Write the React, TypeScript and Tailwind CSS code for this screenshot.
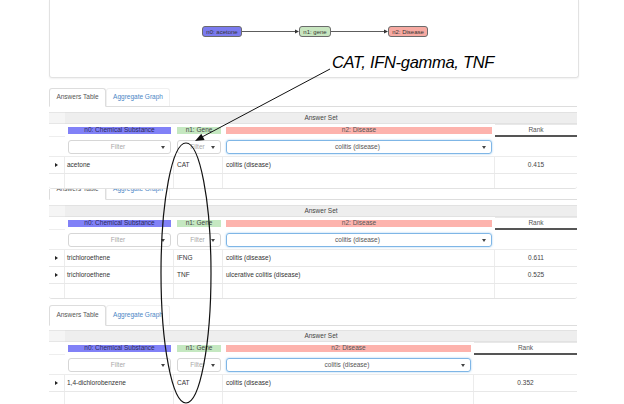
import React from "react";

type Row = [string, string, string, string];

function DownCaret() {
  return (
    <svg width="4" height="3" viewBox="0 0 4 3" className="shrink-0">
      <path d="M0 0h4L2 3z" fill="#444" />
    </svg>
  );
}

function RightCaret() {
  return (
    <svg width="3" height="4" viewBox="0 0 3 4">
      <path d="M0 0v4l3-2z" fill="#222" />
    </svg>
  );
}

function Select({ text, focus }: { text: string; focus?: boolean }) {
  return (
    <div
      className={
        focus
          ? "h-full rounded-[3px] border border-[#7fb6e6] shadow-[0_0_2px_rgba(102,175,233,0.7)] flex items-center pl-[6px] pr-[5px] text-[#555]"
          : "h-full rounded-[3px] border border-[#d6d6d6] flex items-center pl-[6px] pr-[5px] text-[#a8a8a8]"
      }
    >
      <span className="flex-1 text-center leading-none">{text}</span>
      <DownCaret />
    </div>
  );
}

function Node({ label, bg, w }: { label: string; bg: string; w: string }) {
  return (
    <div
      className={`${w} ${bg} h-[11px] border border-[#6b6b6b] rounded-[3px] flex items-center justify-center text-[6px] leading-none text-[#333]`}
    >
      {label}
    </div>
  );
}

function GraphArrow({ w }: { w: number }) {
  return (
    <svg width={w} height="11" viewBox={`0 0 ${w} 11`} className="shrink-0">
      <line x1="0" y1="5.5" x2={w - 3} y2="5.5" stroke="#333" strokeWidth="0.8" />
      <path d={`M${w - 4} 3.6L${w} 5.5L${w - 4} 7.4z`} fill="#333" />
    </svg>
  );
}

function Table({
  cols,
  rows,
  tabH,
  gap,
  blankH,
  bottomLine,
}: {
  cols: string;
  rows: Row[];
  tabH: string;
  gap: string;
  blankH: string;
  bottomLine?: boolean;
}) {
  return (
    <div className="w-[528px] ml-[49px] text-[6.5px] leading-none text-[#333]">
      <div className={`flex ${tabH} border-b border-[#dddddd]`}>
        <div className="w-[57px] -mb-px bg-white border border-[#dddddd] border-b-white rounded-t-[3px] flex items-center justify-center text-[#555]">
          Answers Table
        </div>
        <div className="w-[64px] border border-b-0 border-[#f0f0f0] rounded-t-[3px] flex items-center justify-center text-[#4a86c5]">
          Aggregate Graph
        </div>
      </div>
      <div className={`grid ${cols} h-[12px] ${gap}`}>
        <div className="bg-[#f5f5f5] border-y border-[#e6e6e6]" />
        <div className="col-span-4 bg-[#eeeeee] border-y border-[#e2e2e2] flex items-center justify-center text-[#444]">
          Answer Set
        </div>
      </div>
      <div className={`grid ${cols} h-[13px] items-center`}>
        <div className="h-full border-b border-[#eeeeee]" />
        <div className="px-[3px]">
          <div className="h-[7px] bg-[#8181f7] flex items-center justify-center text-[#2a2a5a]">
            n0: Chemical Substance
          </div>
        </div>
        <div className="pl-[3px] pr-[2px]">
          <div className="h-[7px] bg-[#c5e8c1] flex items-center justify-center text-[#444]">
            n1: Gene
          </div>
        </div>
        <div className="px-[3px]">
          <div className="h-[7px] bg-[#fdb3ad] flex items-center justify-center text-[#555]">
            n2: Disease
          </div>
        </div>
        <div className="h-full border-t border-t-[#e8e8e8] border-b-2 border-b-[#555] flex items-center justify-center text-[#555]">
          Rank
        </div>
      </div>
      <div className={`grid ${cols} h-[20px] pt-[3px] pb-[2px] border-b border-[#ececec]`}>
        <div />
        <div className="px-[3px]">
          <Select text="Filter" />
        </div>
        <div className="pl-[3px] pr-[2px]">
          <Select text="Filter" />
        </div>
        <div className="px-[3px]">
          <Select text="colitis (disease)" focus />
        </div>
        <div />
      </div>
      {rows.map((r, i) => (
        <div key={i} className={`grid ${cols} h-[17px] border-b border-[#e8e8e8]`}>
          <div className="flex items-center justify-center border-r border-[#ececec]">
            <RightCaret />
          </div>
          <div className="flex items-center pl-[2px] border-r border-[#ececec]">{r[0]}</div>
          <div className="flex items-center pl-[3px] border-r border-[#ececec]">{r[1]}</div>
          <div className="flex items-center pl-[3px] border-r border-[#ececec]">{r[2]}</div>
          <div className="flex items-center justify-center text-[#444]">{r[3]}</div>
        </div>
      ))}
      <div
        className={`grid ${cols} ${blankH} ${
          bottomLine ? "border-b border-[#e2e2e2] rounded-b-[3px]" : ""
        }`}
      >
        <div className="border-r border-[#ececec]" />
        <div className="border-r border-[#ececec]" />
        <div className="border-r border-[#ececec]" />
        <div className="border-r border-[#ececec]" />
        <div />
      </div>
    </div>
  );
}

export default function App() {
  return (
    <div className="relative w-[624px] h-[404px] overflow-hidden bg-white font-['Liberation_Sans',Arial,sans-serif]">
      {/* top graph panel */}
      <div className="ml-[49px] w-[530px] h-[78px] border border-t-0 border-[#e2e2e2] rounded-b-[3px] shadow-[0_1px_2px_rgba(0,0,0,0.06)] pt-[26px] pl-[152px] flex items-start">
        <Node label="n0: acetone" bg="bg-[#7b7bef]" w="w-[40px]" />
        <GraphArrow w={57} />
        <Node label="n1: gene" bg="bg-[#c8e6c0]" w="w-[32px]" />
        <GraphArrow w={57} />
        <Node label="n2: Disease" bg="bg-[#f7aaa2]" w="w-[40px]" />
      </div>

      {/* table 1 */}
      <div className="mt-[10px] h-[101px] overflow-hidden">
        <Table
          cols="grid-cols-[16px_109px_49px_272px_82px]"
          rows={[["acetone", "CAT", "colitis (disease)", "0.415"]]}
          tabH="h-[19px]"
          gap="mt-[5px]"
          blankH="h-[15px]"
          bottomLine
        />
      </div>

      {/* table 2 (top clipped) */}
      <div className="h-[111px] overflow-hidden">
        <div className="-mt-[10px]">
          <Table
            cols="grid-cols-[16px_109px_49px_272px_82px]"
            rows={[
              ["trichloroethene", "IFNG", "colitis (disease)", "0.611"],
              ["trichloroethene", "TNF", "ulcerative colitis (disease)", "0.525"],
            ]}
            tabH="h-[21px]"
            gap="mt-[5px]"
            blankH="h-[15px]"
            bottomLine
          />
        </div>
      </div>

      {/* table 3 */}
      <div className="mt-[5px] h-[99px] overflow-hidden">
        <Table
          cols="grid-cols-[16px_109px_49px_251px_103px]"
          rows={[["1,4-dichlorobenzene", "CAT", "colitis (disease)", "0.352"]]}
          tabH="h-[21px]"
          gap="mt-[4px]"
          blankH="h-[14px]"
        />
      </div>

      {/* annotation overlay */}
      <svg
        className="absolute inset-0 pointer-events-none"
        width="624"
        height="404"
        viewBox="0 0 624 404"
      >
        <line x1="330" y1="69" x2="202" y2="137" stroke="#111" strokeWidth="1" />
        <path d="M195 141L204.6 139.9L201.3 133.7z" fill="#111" />
        <ellipse cx="186" cy="273" rx="25" ry="130" fill="none" stroke="#111" strokeWidth="1.2" />
      </svg>
      <div className="absolute left-[332px] top-[54px] italic text-[16.5px] leading-none text-black tracking-[-0.3px] whitespace-nowrap">
        CAT, IFN-gamma, TNF
      </div>
    </div>
  );
}
